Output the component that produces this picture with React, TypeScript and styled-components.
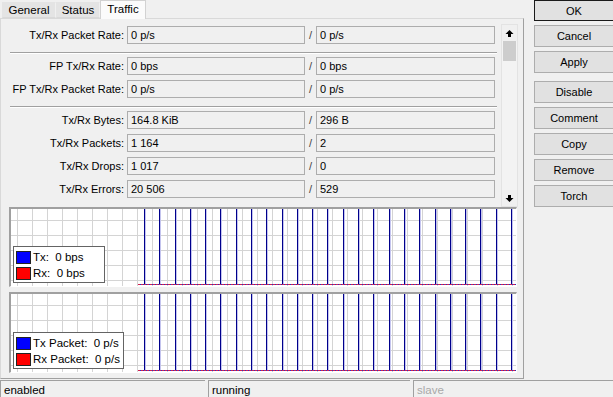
import React from 'react';
import styled, { createGlobalStyle } from 'styled-components';

const GlobalStyle = createGlobalStyle`
  html, body {
    margin: 0;
    padding: 0;
    background: #f0f0f0;
    overflow: hidden;
  }
  body {
    font-family: "Liberation Sans", Arial, sans-serif;
    font-size: 11px;
    color: #000;
  }
`;

const Root = styled.div`
  display: flex;
  flex-direction: column;
  width: 613px;
  height: 397px;
  overflow: hidden;
`;

const Top = styled.div`
  display: flex;
  height: 380px;
`;

const Left = styled.div`
  display: flex;
  flex-direction: column;
  width: 524px;
  flex-shrink: 0;
`;

const TabStrip = styled.div`
  display: flex;
  align-items: flex-end;
  height: 18px;
  padding-left: 2px;
  position: relative;
  z-index: 1;
`;

const Tab = styled.div<{ $active?: boolean; $w: number }>`
  box-sizing: border-box;
  height: ${(p) => (p.$active ? '19px' : '16px')};
  margin-bottom: ${(p) => (p.$active ? '-1px' : '0')};
  width: ${(p) => p.$w}px;
  text-align: center;
  font-size: 11.5px;
  line-height: ${(p) => (p.$active ? '16px' : '15px')};
  background: ${(p) => (p.$active ? '#fbfbfb' : '#e4e4e4')};
  border: 1px solid ${(p) => (p.$active ? '#d2d2d2' : '#e4e4e4')};
  border-bottom: ${(p) => (p.$active ? 'none' : '1px solid #d9d9d9')};
  border-right-color: ${(p) => (p.$active ? '#d2d2d2' : '#f0f0f0')};
`;

const Panel = styled.div`
  flex: 1;
  display: flex;
  flex-direction: column;
  border: 1px solid #d9d9d9;
  border-right-color: #a0a0a0;
  border-bottom-color: #a0a0a0;
  margin-bottom: 1px;
  padding: 5px 0 5px 0;
`;

const FormArea = styled.div`
  display: flex;
  height: 183px;
`;

const Rows = styled.div`
  width: 500px;
  display: flex;
  flex-direction: column;
  gap: 5px;
  padding-top: 2px;
`;

const Row = styled.div`
  display: flex;
  height: 18px;
`;

const Label = styled.div`
  width: 123px;
  margin-right: 3px;
  text-align: right;
  line-height: 18px;
  white-space: nowrap;
`;

const Field = styled.div<{ $w: number }>`
  box-sizing: border-box;
  width: ${(p) => p.$w}px;
  height: 18px;
  border: 1px solid #adadad;
  background: #f0f0f0;
  padding-left: 3px;
  line-height: 16px;
  white-space: nowrap;
`;

const Slash = styled.div`
  width: 11px;
  text-align: center;
  line-height: 18px;
  color: #444;
`;

const Separator = styled.div`
  margin: 3px 0 -2px 9px;
  width: 487px;
  height: 0;
  border-top: 1px solid #a0a0a0;
  border-bottom: 1px solid #fff;
`;

const ScrollBar = styled.div`
  box-sizing: border-box;
  width: 17px;
  height: 183px;
  display: flex;
  flex-direction: column;
  border: 1px solid #e3e3e3;
  background: #f3f3f3;
`;

const ScrollBtn = styled.div`
  height: 16px;
  display: flex;
  align-items: center;
  justify-content: center;
  background: #f0f0f0;
`;

const Thumb = styled.div`
  height: 20px;
  background: #cdcdcd;
  margin: 0 1px;
`;

const Track = styled.div`
  flex: 1;
`;

const Graph = styled.div<{ $mt: number; $h: number }>`
  position: relative;
  box-sizing: border-box;
  margin: ${(p) => p.$mt}px 0 0 8px;
  width: 508px;
  height: ${(p) => p.$h}px;
  border-top: 2px solid #a0a0a0;
  border-left: 2px solid #a0a0a0;
  border-right: 1px solid #fff;
  border-bottom: 1px solid #fff;
  background: #fff;

  svg {
    display: block;
  }
`;

const Legend = styled.div<{ $w: number }>`
  position: absolute;
  left: 2px;
  bottom: 3px;
  box-sizing: border-box;
  width: ${(p) => p.$w}px;
  background: #fff;
  border: 1px solid #646464;
  padding: 2px 2px 1px 2px;
`;

const LegendItem = styled.div`
  display: flex;
  align-items: center;
  height: 16px;
  font-size: 11.5px;
  white-space: pre;
`;

const Swatch = styled.div<{ $c: string }>`
  box-sizing: border-box;
  width: 15px;
  height: 13px;
  border: 1px solid #222;
  background: ${(p) => p.$c};
  margin-right: 2px;
`;

const ButtonCol = styled.div`
  display: flex;
  flex-direction: column;
  margin-left: 10px;
  width: 80px;
  flex-shrink: 0;
`;

const Button = styled.div<{ $default?: boolean; $mt: number }>`
  box-sizing: border-box;
  height: ${(p) => (p.$default ? '21px' : '22px')};
  margin-top: ${(p) => p.$mt}px;
  border: 1px solid ${(p) => (p.$default ? '#1a1a1a' : '#adadad')};
  background: #e1e1e1;
  display: flex;
  align-items: center;
  justify-content: center;
`;

const StatusBar = styled.div`
  display: flex;
  gap: 3px;
  height: 17px;
`;

const StatusCell = styled.div<{ $w: number; $muted?: boolean }>`
  box-sizing: border-box;
  width: ${(p) => p.$w}px;
  flex-shrink: 0;
  height: 17px;
  border-top: 1px solid #a0a0a0;
  border-left: 1px solid #a0a0a0;
  padding-left: 3px;
  font-size: 11.5px;
  line-height: 19px;
  color: ${(p) => (p.$muted ? '#a8a8a8' : '#000')};
`;

const Arrow = ({ down }: { down?: boolean }) => (
  <svg width="9" height="9" viewBox="0 0 9 9">
    <path
      d="M4.5 1 L8.5 5 L6 5 L6 8 L3 8 L3 5 L0.5 5 Z"
      fill="#000"
      transform={down ? 'rotate(180 4.5 4.5)' : undefined}
    />
  </svg>
);

const GraphArt = ({ w, h }: { w: number; h: number }) => {
  const vgrid: number[] = [];
  for (let x = 6; x < w; x += 15) vgrid.push(x);
  const hgrid: number[] = [];
  for (let y = 11; y < h; y += 15) hgrid.push(y);
  const bars: number[] = [];
  for (let i = 0; i < 25; i++) bars.push(Math.round(133 + i * 15.29));
  const base = h - 2;
  return (
    <svg width={w} height={h}>
      {vgrid.map((x) => (
        <line key={'v' + x} x1={x + 0.5} y1={0} x2={x + 0.5} y2={h} stroke="#d4d4d4" />
      ))}
      {hgrid.map((y) => (
        <line key={'h' + y} x1={0} y1={y + 0.5} x2={w} y2={y + 0.5} stroke="#d4d4d4" />
      ))}
      {bars.map((x) => (
        <g key={'b' + x}>
          <line x1={x + 0.5} y1={0} x2={x + 0.5} y2={base} stroke="#00008c" />
          <line x1={x + 1.5} y1={0} x2={x + 1.5} y2={base} stroke="#c4c4ee" />
        </g>
      ))}
      <line x1={127} y1={base + 0.5} x2={w} y2={base + 0.5} stroke="#d02050" strokeDasharray="2 1" />
      <line x1={129} y1={base + 0.5} x2={w} y2={base + 0.5} stroke="#3030c0" strokeDasharray="1 2" />
    </svg>
  );
};

const rows1 = [['Tx/Rx Packet Rate:', '0 p/s', '0 p/s']];
const rows2 = [
  ['FP Tx/Rx Rate:', '0 bps', '0 bps'],
  ['FP Tx/Rx Packet Rate:', '0 p/s', '0 p/s'],
];
const rows3 = [
  ['Tx/Rx Bytes:', '164.8 KiB', '296 B'],
  ['Tx/Rx Packets:', '1 164', '2'],
  ['Tx/Rx Drops:', '1 017', '0'],
  ['Tx/Rx Errors:', '20 506', '529'],
];

const renderRows = (rows: string[][]) =>
  rows.map(([label, a, b]) => (
    <Row key={label}>
      <Label>{label}</Label>
      <Field $w={178}>{a}</Field>
      <Slash>/</Slash>
      <Field $w={179}>{b}</Field>
    </Row>
  ));

const buttons: [string, number][] = [
  ['Cancel', 4],
  ['Apply', 4],
  ['Disable', 8],
  ['Comment', 4],
  ['Copy', 4],
  ['Remove', 4],
  ['Torch', 4],
];

export default function App() {
  return (
    <Root>
      <GlobalStyle />
      <Top>
        <Left>
          <TabStrip>
            <Tab $w={54}>General</Tab>
            <Tab $w={44}>Status</Tab>
            <Tab $w={46} $active>
              Traffic
            </Tab>
          </TabStrip>
          <Panel>
            <FormArea>
              <Rows>
                {renderRows(rows1)}
                <Separator />
                {renderRows(rows2)}
                <Separator />
                {renderRows(rows3)}
              </Rows>
              <ScrollBar>
                <ScrollBtn>
                  <Arrow />
                </ScrollBtn>
                <Thumb />
                <Track />
                <ScrollBtn>
                  <Arrow down />
                </ScrollBtn>
              </ScrollBar>
            </FormArea>
            <Graph $mt={0} $h={80}>
              <GraphArt w={505} h={77} />
              <Legend $w={92}>
                <LegendItem>
                  <Swatch $c="#0000ff" />
                  {'Tx:  0 bps'}
                </LegendItem>
                <LegendItem>
                  <Swatch $c="#ff0000" />
                  {'Rx:  0 bps'}
                </LegendItem>
              </Legend>
            </Graph>
            <Graph $mt={5} $h={81}>
              <GraphArt w={505} h={78} />
              <Legend $w={111}>
                <LegendItem>
                  <Swatch $c="#0000ff" />
                  {'Tx Packet:  0 p/s'}
                </LegendItem>
                <LegendItem>
                  <Swatch $c="#ff0000" />
                  {'Rx Packet:  0 p/s'}
                </LegendItem>
              </Legend>
            </Graph>
          </Panel>
        </Left>
        <ButtonCol>
          <Button $default $mt={0}>
            OK
          </Button>
          {buttons.map(([t, mt]) => (
            <Button key={t} $mt={mt}>
              {t}
            </Button>
          ))}
        </ButtonCol>
      </Top>
      <StatusBar>
        <StatusCell $w={205}>enabled</StatusCell>
        <StatusCell $w={202}>running</StatusCell>
        <StatusCell $w={210} $muted>
          slave
        </StatusCell>
      </StatusBar>
    </Root>
  );
}
